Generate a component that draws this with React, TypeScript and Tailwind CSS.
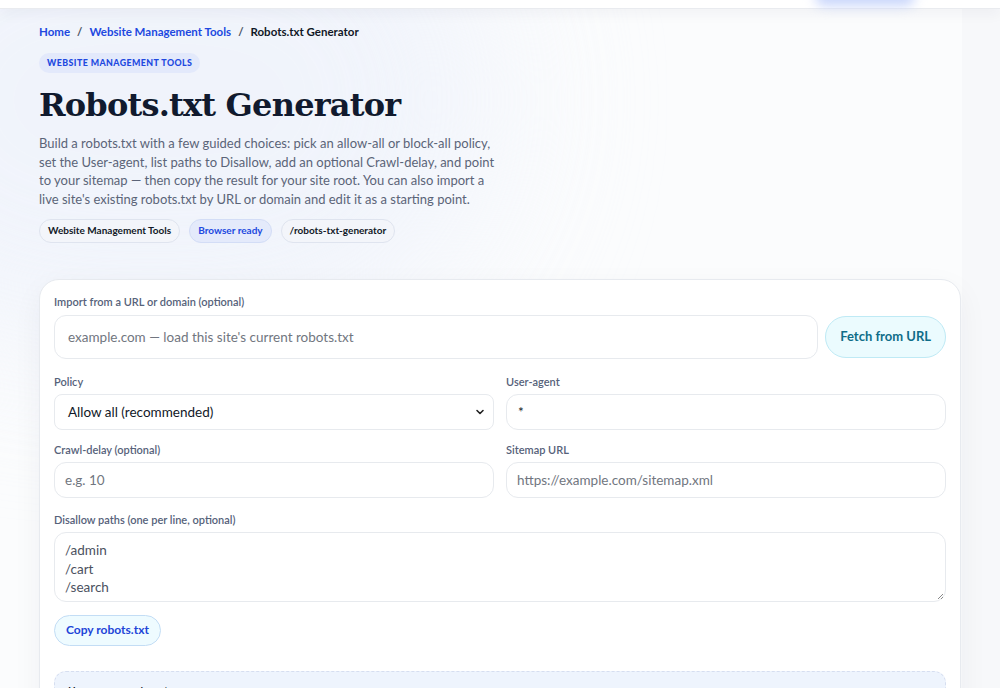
import React from "react";

export default function App() {
  const sans = { fontFamily: "Lato, Inter, 'Noto Sans', sans-serif" };
  return (
    <div
      className="relative w-[1000px] h-[688px] overflow-hidden bg-[#fbfcfd] text-[#111a2e]"
      style={sans}
    >
      {/* background tint */}
      <div className="pointer-events-none absolute -left-[200px] -top-[150px] w-[700px] h-[500px] rounded-full bg-[#eef2fb] blur-[80px] opacity-80" />
      <div className="pointer-events-none absolute right-0 top-0 w-[38px] h-[688px] bg-[#f7f8fa]" />

      {/* header strip */}
      <div className="relative h-[9px] bg-white border-b border-[#e9ebef] shadow-[0_4px_14px_rgba(20,30,60,0.06)]">
        <div className="absolute left-[815px] -top-[12px] w-[100px] h-[18px] rounded-full bg-[#c9d6fb] blur-[6px]" />
      </div>

      <div className="relative px-[39px]">
        {/* breadcrumb */}
        <nav className="mt-[15px] flex items-center gap-[7px] text-[11.5px] font-bold leading-[16px]">
          <span className="text-[#2148e0]">Home</span>
          <span className="text-[#4b5563]">/</span>
          <span className="text-[#2148e0]">Website Management Tools</span>
          <span className="text-[#4b5563]">/</span>
          <span className="text-[#111827]">Robots.txt Generator</span>
        </nav>

        <div className="mt-[13px] inline-flex h-[20px] items-center rounded-full bg-[#e3e9fb] px-[8px] text-[8.8px] font-black tracking-[0.05em] text-[#2148e0]">
          WEBSITE MANAGEMENT TOOLS
        </div>

        <h1
          className="mt-[10px] text-[32px] leading-[44px] font-bold text-[#111a2e] tracking-[-0.025em]"
          style={{ fontFamily: "'DejaVu Serif', 'Liberation Serif', serif" }}
        >
          Robots.txt Generator
        </h1>

        <p className="mt-[7px] text-[13px] leading-[18.7px] text-[#5b6478] whitespace-nowrap">
          Build a robots.txt with a few guided choices: pick an allow-all or block-all policy,
          <br />
          set the User-agent, list paths to Disallow, add an optional Crawl-delay, and point
          <br />
          to your sitemap — then copy the result for your site root. You can also import a
          <br />
          live site's existing robots.txt by URL or domain and edit it as a starting point.
        </p>

        <div className="mt-[10px] flex gap-[9px] text-[10px] font-bold">
          <span className="flex h-[24px] items-center rounded-full border border-[#dfe4ef] bg-[#f3f5fa] px-[8px] text-[#111827]">
            Website Management Tools
          </span>
          <span className="flex h-[24px] items-center rounded-full border border-[#d3ddf6] bg-[#e4eafb] px-[8px] text-[#2148e0]">
            Browser ready
          </span>
          <span className="flex h-[24px] items-center rounded-full border border-[#dfe4ef] bg-[#f3f5fa] px-[8px] text-[#111827]">
            /robots-txt-generator
          </span>
        </div>

        {/* card */}
        <div className="mt-[36px] w-[922px] rounded-[20px] border border-[#e7eaef] bg-white px-[14px] pt-[15px] pb-[40px] shadow-[0_10px_30px_rgba(20,30,60,0.05)]">
          <label className="block text-[11px] font-semibold leading-[14px] text-[#56627a]">
            Import from a URL or domain (optional)
          </label>
          <div className="mt-[6px] flex items-center gap-[7px]">
            <div className="flex h-[44px] flex-1 items-center rounded-[12px] border border-[#e7eaee] px-[13px] text-[13.5px] text-[#717680]">
              example.com — load this site's current robots.txt
            </div>
            <button className="h-[42px] rounded-full border border-[#bfeaf5] bg-[#ebfbfe] px-[14px] text-[13px] font-bold text-[#0f6d89]">
              Fetch from URL
            </button>
          </div>

          <div className="mt-[16px] grid grid-cols-2 gap-x-[12px]">
            <div>
              <label className="block text-[11px] font-semibold leading-[14px] text-[#56627a]">Policy</label>
              <div className="mt-[5px] flex h-[36px] items-center justify-between rounded-[8px] border border-[#e7eaee] px-[13px] text-[13.5px] text-[#111827]">
                <span>Allow all (recommended)</span>
                <svg width="10" height="10" viewBox="0 0 10 10" className="mr-[-5px]">
                  <path d="M2 3.5 L5 6.5 L8 3.5" fill="none" stroke="#222" strokeWidth="1.6" strokeLinecap="round" strokeLinejoin="round" />
                </svg>
              </div>
            </div>
            <div>
              <label className="block text-[11px] font-semibold leading-[14px] text-[#56627a]">User-agent</label>
              <div className="mt-[5px] flex h-[36px] items-center rounded-[12px] border border-[#e7eaee] px-[11px] text-[13.5px] text-[#111827]">
                *
              </div>
            </div>
            <div className="mt-[13px]">
              <label className="block text-[11px] font-semibold leading-[14px] text-[#56627a]">Crawl-delay (optional)</label>
              <div className="mt-[5px] flex h-[36px] items-center rounded-[12px] border border-[#e7eaee] px-[10px] text-[13.5px] text-[#717680]">
                e.g. 10
              </div>
            </div>
            <div className="mt-[13px]">
              <label className="block text-[11px] font-semibold leading-[14px] text-[#56627a]">Sitemap URL</label>
              <div className="mt-[5px] flex h-[36px] items-center rounded-[12px] border border-[#e7eaee] px-[10px] text-[13.5px] text-[#717680]">
                https://example.com/sitemap.xml
              </div>
            </div>
          </div>

          <label className="mt-[15px] block text-[11px] font-semibold leading-[14px] text-[#56627a]">
            Disallow paths (one per line, optional)
          </label>
          <div className="relative mt-[5px] h-[70px] rounded-[12px] border border-[#e7eaee] px-[10px] pt-[8px] text-[13.5px] leading-[18.7px] text-[#4b5160]">
            <div>/admin</div>
            <div>/cart</div>
            <div>/search</div>
            <svg className="absolute right-[1px] bottom-[1px]" width="8" height="8" viewBox="0 0 8 8">
              <path d="M7 2 L2 7 M7 5 L5 7" stroke="#888" strokeWidth="1" />
            </svg>
          </div>

          <button className="mt-[13px] h-[31px] rounded-full border border-[#c3ddf5] bg-[#eefbff] px-[11px] text-[12px] font-bold text-[#1d45d8]">
            Copy robots.txt
          </button>

          <div className="mt-[25px] h-[60px] rounded-[12px] border border-dashed border-[#d6def0] bg-[#eef4fd] px-[13px] pt-[10px] text-[13px] text-[#111827]" style={{ fontFamily: "'DejaVu Sans Mono', monospace" }}>
            User-agent: *
          </div>
        </div>
      </div>
    </div>
  );
}
